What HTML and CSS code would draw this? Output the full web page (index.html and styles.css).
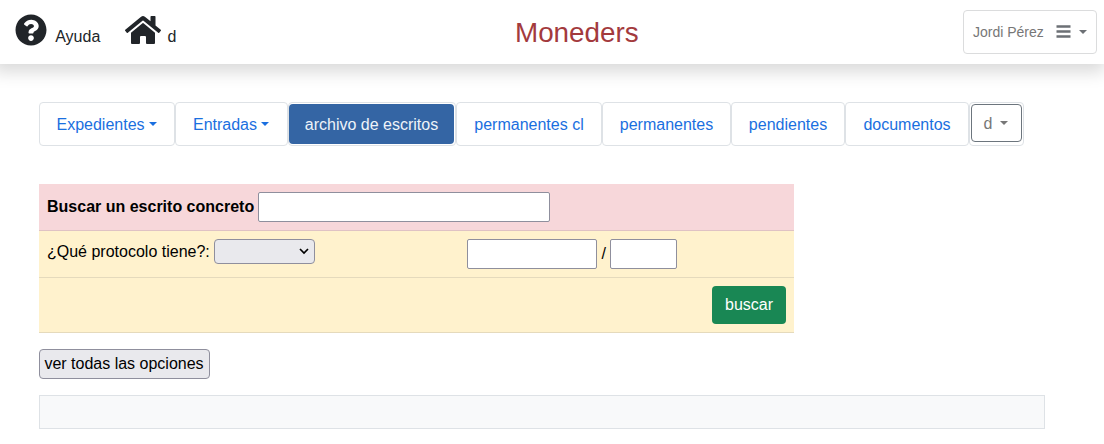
FILE: index.html
```html
<!DOCTYPE html>
<html lang="es">
<head>
<meta charset="utf-8">
<title>Moneders</title>
<link rel="stylesheet" href="styles.css">
</head>
<body>
<header class="topbar">
  <nav class="links">
    <a class="link"><svg class="icon-help" viewBox="0 0 512 512"><path d="M504 256c0 136.997-111.043 248-248 248S8 392.997 8 256C8 119.083 119.043 8 256 8s248 111.083 248 248zM262.655 90c-54.497 0-89.255 22.957-116.549 63.758-3.536 5.286-2.353 12.415 2.715 16.258l34.699 26.31c5.205 3.947 12.621 3.008 16.665-2.122 17.864-22.658 30.113-35.797 57.303-35.797 20.429 0 45.698 13.148 45.698 32.958 0 14.976-12.363 22.667-32.534 33.976C247.128 238.528 216 254.941 216 296v4c0 6.627 5.373 12 12 12h56c6.627 0 12-5.373 12-12v-1.333c0-28.462 83.186-29.647 83.186-106.667 0-58.002-60.165-102-116.531-102zM256 338c-25.365 0-46 20.635-46 46 0 25.364 20.635 46 46 46s46-20.636 46-46c0-25.364-20.635-46-46-46z"/></svg><span class="link-text">Ayuda</span></a>
    <a class="link"><svg class="icon-home" viewBox="0 0 576 512"><path d="M280.37 148.26L96 300.11V464a16 16 0 0 0 16 16l112.06-.29a16 16 0 0 0 15.92-16V368a16 16 0 0 1 16-16h64a16 16 0 0 1 16 16v95.64a16 16 0 0 0 16 16.05L464 480a16 16 0 0 0 16-16V300L295.67 148.26a12.19 12.19 0 0 0-15.3 0zM571.6 251.47L488 182.56V44.05a12 12 0 0 0-12-12h-56a12 12 0 0 0-12 12v72.61L318.47 43a48 48 0 0 0-61 0L4.34 251.47a12 12 0 0 0-1.6 16.9l25.5 31A12 12 0 0 0 45.15 301l235.22-193.74a12.19 12.19 0 0 1 15.3 0L530.9 301a12 12 0 0 0 16.9-1.6l25.5-31a12 12 0 0 0-1.7-16.93z"/></svg><span class="link-text">d</span></a>
  </nav>
  <h1 class="title">Moneders</h1>
  <div class="account">
    <button class="user"><span>Jordi Pérez</span><svg class="icon-bars" viewBox="0 0 15 13"><path d="M.5 .3h14v2.4H.5zM.5 5.3h14v2.4H.5zM.5 10.3h14v2.4H.5z"/></svg><span class="caret"></span></button>
  </div>
</header>
<main class="page">
  <ul class="tabs">
    <li class="tab w-expedientes">Expedientes<span class="caret"></span></li>
    <li class="tab w-entradas">Entradas<span class="caret"></span></li>
    <li class="tab w-archivo"><span class="active">archivo de escritos</span></li>
    <li class="tab w-cl">permanentes cl</li>
    <li class="tab w-permanentes">permanentes</li>
    <li class="tab w-pendientes">pendientes</li>
    <li class="tab w-documentos">documentos</li>
    <li class="tab w-more"><button class="more">d<span class="caret"></span></button></li>
  </ul>
  <form class="search">
    <div class="row row-head"><b>Buscar un escrito concreto</b><input class="field field-long" type="text"></div>
    <div class="row row-protocol">
      <div class="cell-select"><span class="label">¿Qué protocolo tiene?:</span><span class="select"><svg class="chevron" viewBox="0 0 10 7"><path d="M1 1l4 4 4-4"/></svg></span></div>
      <div class="cell-number"><input class="field field-num" type="text"><span class="slash">/</span><input class="field field-year" type="text"></div>
    </div>
    <div class="row row-submit"><button class="submit" type="button">buscar</button></div>
  </form>
  <button class="options">ver todas las opciones</button>
  <div class="results"></div>
</main>
</body>
</html>
```

FILE: styles.css
```css
* { box-sizing: border-box; }
body {
  margin: 0;
  height: 444px;
  overflow: hidden;
  background: #fff;
  color: #000;
  font: 16px/24px "Liberation Sans", Arial, sans-serif;
}
button, input { font: inherit; margin: 0; }
.topbar {
  display: grid;
  grid-template-columns: 500px auto 1fr;
  height: 64px;
  padding: 0 7px 0 15px;
  box-shadow: -3px 4px 16px 4px rgba(0, 0, 0, .15);
}
.links { display: flex; gap: 25px; padding-top: 14px; color: #212529; }
.link { display: flex; }
.link svg { fill: #212529; flex: none; }
.icon-help { width: 32px; height: 32px; }
.icon-home { width: 36px; height: 32px; }
.link-text { padding-top: 11px; margin-left: 8.5px; }
.link:first-child svg { margin-left: -.3px; }
.link + .link svg { margin-left: .2px; }
.link + .link .link-text { margin-left: 6px; }
.title {
  margin: 0;
  padding-top: 16px;
  font-size: 27.8px;
  line-height: 33.6px;
  font-weight: 400;
  color: #a33a3d;
}
.account { display: flex; justify-content: flex-end; padding-top: 10px; }
.user {
  display: flex;
  align-items: center;
  width: 134px;
  height: 44px;
  padding: 0 9px;
  border: 1px solid #dbdcdd;
  border-radius: 4px;
  background: #fff;
  color: #777;
  font-size: 14px;
  white-space: nowrap;
}
.icon-bars { flex: none; width: 15px; height: 13px; margin: 0 8px 1px auto; fill: #6c7075; }
.caret {
  display: inline-block;
  border: 4px solid transparent;
  border-top-color: currentColor;
  border-bottom: 0;
}
.user .caret { color: #6c7075; margin-bottom: 1px; }
.page { padding: 38px 0 0 39px; }
.tabs { display: flex; margin: 0; padding: 0; list-style: none; }
.tab {
  display: flex;
  align-items: center;
  justify-content: center;
  height: 44px;
  padding-top: 1px;
  border: 1px solid #dee2e6;
  border-radius: 4px;
  color: #1a6fe0;
}
.tab > .caret { margin: 0 0 1px 4px; }
.w-expedientes { width: 136px; padding-right: 1px; }
.w-entradas { width: 113px; padding-right: 1px; }
.w-archivo { width: 168px; padding: 1px 0 0; justify-content: flex-start; align-items: flex-start; }
.w-cl { width: 146px; }
.w-permanentes { width: 129px; }
.w-pendientes { width: 114px; }
.w-documentos { width: 124px; }
.w-more { width: 55px; align-items: flex-start; }
.active {
  width: 165px;
  height: 40px;
  padding-top: 1px;
  border-radius: 4px;
  background: #3465a4;
  color: #eef3f9;
  line-height: 40px;
  text-align: center;
}
.more {
  display: flex;
  align-items: center;
  justify-content: center;
  gap: 8px;
  width: 51px;
  height: 38px;
  padding: 1px 1px 0 0;
  border: 1px solid #6c757d;
  border-radius: 4px;
  background: #fff;
  color: #777;
}
.more .caret { margin-bottom: 1px; }
.search { width: 755px; margin: 38px 0 16px; }
.row { display: flex; border-bottom: 1px solid #e5dabc; background: #fff2cd; }
.row-head {
  align-items: flex-start;
  height: 47px;
  padding: 8px 8px 0;
  border-color: #dfc2c4;
  background: #f7d7da;
  gap: 4px;
}
.row-head b { padding-top: 3px; }
.row-protocol { height: 47px; padding: 8px 8px 0; }
.row-submit { height: 55px; padding: 8px 8px 0; justify-content: flex-end; }
.field {
  height: 30px;
  padding: 1px 2px;
  border: 1px solid #8f8f9d;
  border-radius: 2px;
  background: #fff;
}
.field-long { width: 292px; }
.field-num { width: 130px; }
.field-year { width: 67px; }
.cell-select { display: flex; gap: 4px; width: 420px; align-items: flex-start; }
.label { padding-top: 1px; }
.select {
  display: flex;
  align-items: center;
  justify-content: flex-end;
  width: 101px;
  height: 25px;
  padding-right: 5px;
  border: 1px solid #8f8f9d;
  border-radius: 4px;
  background: #e9e9ed;
}
.chevron { width: 10px; height: 7px; fill: none; stroke: #000; stroke-width: 1.7; }
.cell-number { display: flex; align-items: flex-start; }
.slash { padding: 3px 4.5px 0 4.5px; }
.submit {
  width: 74px;
  height: 38px;
  padding: 0;
  border: 0;
  border-radius: 4px;
  background: #198754;
  color: #fff;
}
.options {
  display: block;
  width: 171px;
  height: 30px;
  padding: 0 1px 0 0;
  border: 1px solid #8f8f9d;
  border-radius: 4px;
  background: #e9e9ed;
  color: #000;
}
.results {
  width: 1006px;
  height: 34px;
  margin-top: 16px;
  border: 1px solid #dee2e6;
  background: #f8f9fa;
}
```
